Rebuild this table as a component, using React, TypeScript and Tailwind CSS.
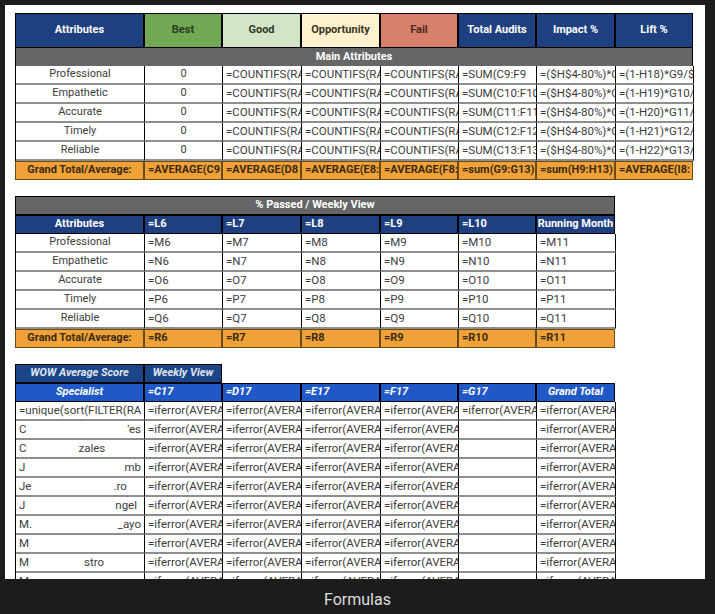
import React from "react";

// column widths shared by the three sheets
const W = ["w-[129px]", "w-[78px]", "w-[79px]", "w-[79px]", "w-[78px]", "w-[78px]", "w-[79px]", "w-[78px]"];

const attrs = ["Professional", "Empathetic", "Accurate", "Timely", "Reliable"];

const HeadCell = ({ w, bg, text = "text-white", align = "justify-center", italic = false, children }: any) => (
    <div
        className={`${w} ${bg} ${text} ${align} ${italic ? "italic" : ""} flex h-full shrink-0 items-center overflow-hidden whitespace-nowrap border border-black px-[3px] text-[11px] font-bold`}
    >
        {children}
    </div>
);

const DataCell = ({ w, center = false, children }: any) => (
    <div
        className={`${w} ${center ? "justify-center text-[11px]" : "text-[11.5px]"} flex h-[19px] shrink-0 items-center overflow-hidden whitespace-nowrap border-r border-b-2 border-r-black border-b-[#8e8e8e] bg-white px-[3px] text-[#3c3c3c]`}
    >
        {children}
    </div>
);

const TotalCell = ({ w, center = false, children }: any) => (
    <div
        className={`${w} ${center ? "justify-center" : ""} flex h-[19px] shrink-0 items-center overflow-hidden whitespace-nowrap border border-[#6b4a14] bg-[#f0a238] px-[3px] text-[11px] font-bold text-[#3a2a10]`}
    >
        {children}
    </div>
);

const Row = ({ children }: any) => <div className="flex border-l border-black">{children}</div>;

const MainSheet = () => {
    const rows = attrs.map((a, i) => [
        a,
        "0",
        "=COUNTIFS(RA",
        "=COUNTIFS(RA",
        "=COUNTIFS(RA",
        `=SUM(C${9 + i}:F${9 + i}`,
        "=($H$4-80%)*G",
        i === 0 ? "=(1-H18)*G9/$" : `=(1-H${18 + i})*G${9 + i}/`,
    ]);
    return (
        <div className="w-[678px]">
            <div className="flex h-[35px]">
                <HeadCell w={W[0]} bg="bg-[#1f4080]">Attributes</HeadCell>
                <HeadCell w={W[1]} bg="bg-[#70a854]" text="text-[#2b3a22]">Best</HeadCell>
                <HeadCell w={W[2]} bg="bg-[#d3e5c7]" text="text-[#2f3a2a]">Good</HeadCell>
                <HeadCell w={W[3]} bg="bg-[#fff2cc]" text="text-[#3a3526]">Opportunity</HeadCell>
                <HeadCell w={W[4]} bg="bg-[#d9806c]" text="text-[#4a2a22]">Fail</HeadCell>
                <HeadCell w={W[5]} bg="bg-[#1f4080]">Total Audits</HeadCell>
                <HeadCell w={W[6]} bg="bg-[#1f4080]">Impact %</HeadCell>
                <HeadCell w={W[7]} bg="bg-[#1f4080]">Lift %</HeadCell>
            </div>
            <div className="flex h-[18px] items-center justify-center border-x border-black bg-[#666666] text-[11px] font-bold text-white">
                Main Attributes
            </div>
            {rows.map((r, i) => (
                <Row key={i}>
                    {r.map((c, j) => (
                        <DataCell key={j} w={W[j]} center={j < 2}>
                            {c}
                        </DataCell>
                    ))}
                </Row>
            ))}
            <div className="flex">
                <TotalCell w={W[0]} center>Grand Total/Average:</TotalCell>
                <TotalCell w={W[1]}>=AVERAGE(C9</TotalCell>
                <TotalCell w={W[2]}>=AVERAGE(D8</TotalCell>
                <TotalCell w={W[3]}>=AVERAGE(E8:</TotalCell>
                <TotalCell w={W[4]}>=AVERAGE(F8:</TotalCell>
                <TotalCell w={W[5]}>=sum(G9:G13)</TotalCell>
                <TotalCell w={W[6]}>=sum(H9:H13)</TotalCell>
                <TotalCell w={W[7]}>=AVERAGE(I8:</TotalCell>
            </div>
        </div>
    );
};

const WeeklySheet = () => {
    const letters = ["M", "N", "O", "P", "Q"];
    const heads = ["=L6", "=L7", "=L8", "=L9", "=L10"];
    return (
        <div className="w-[600px]">
            <div className="flex h-[19px] items-center justify-center border border-black bg-[#666666] text-[11px] font-bold text-white">
                % Passed / Weekly View
            </div>
            <div className="flex h-[19px]">
                <HeadCell w={W[0]} bg="bg-[#1f4080]">Attributes</HeadCell>
                {heads.map((h, i) => (
                    <HeadCell key={h} w={W[i + 1]} bg="bg-[#1f4080]" align="justify-start">
                        {h}
                    </HeadCell>
                ))}
                <HeadCell w={W[6]} bg="bg-[#1f4080]">Running Month</HeadCell>
            </div>
            {attrs.map((a, i) => (
                <Row key={a}>
                    <DataCell w={W[0]} center>{a}</DataCell>
                    {[6, 7, 8, 9, 10, 11].map((n, j) => (
                        <DataCell key={n} w={W[j + 1]}>
                            ={letters[i]}
                            {n}
                        </DataCell>
                    ))}
                </Row>
            ))}
            <div className="flex">
                <TotalCell w={W[0]} center>Grand Total/Average:</TotalCell>
                {[6, 7, 8, 9, 10, 11].map((n, j) => (
                    <TotalCell key={n} w={W[j + 1]}>=R{n}</TotalCell>
                ))}
            </div>
        </div>
    );
};

// names are partly blurred in the source
const names: [string, string, string][] = [
    ["C", "'es", "ml-auto"],
    ["C", "zales", "ml-[52px]"],
    ["J", "mb", "ml-auto"],
    ["Je", ".ro", "ml-[82px]"],
    ["J", "ngel", "ml-auto mr-[4px]"],
    ["M.", "_ayo", "ml-auto"],
    ["M", "", ""],
    ["M", "stro", "ml-[55px]"],
    ["Ma", "ey", "ml-[60px]"],
];

const WowSheet = () => (
    <div className="w-[600px]">
        <div className="flex h-[19px]">
            <HeadCell w={W[0]} bg="bg-[#1c4587]" text="text-[#dfe6f5]" italic>WOW Average Score</HeadCell>
            <HeadCell w={W[1]} bg="bg-[#1c4587]" text="text-[#dfe6f5]" italic>Weekly View</HeadCell>
        </div>
        <div className="flex h-[19px]">
            <HeadCell w={W[0]} bg="bg-[#2158c7]" italic>Specialist</HeadCell>
            {["=C17", "=D17", "=E17", "=F17", "=G17"].map((h, i) => (
                <HeadCell key={h} w={W[i + 1]} bg="bg-[#2158c7]" align="justify-start" italic>
                    {h}
                </HeadCell>
            ))}
            <HeadCell w={W[6]} bg="bg-[#2158c7]" italic>Grand Total</HeadCell>
        </div>
        <Row>
            <DataCell w={W[0]}>=unique(sort(FILTER(RA</DataCell>
            {[1, 2, 3, 4, 5, 6].map((j) => (
                <DataCell key={j} w={W[j]}>=iferror(AVERA</DataCell>
            ))}
        </Row>
        {names.map(([a, b, m], i) => (
            <Row key={i}>
                <DataCell w={W[0]}>
                    <span>{a}</span>
                    {b && <span className={m}>{b}</span>}
                </DataCell>
                {[1, 2, 3, 4].map((j) => (
                    <DataCell key={j} w={W[j]}>=iferror(AVERA</DataCell>
                ))}
                <DataCell w={W[5]}></DataCell>
                <DataCell w={W[6]}>=iferror(AVERA</DataCell>
            </Row>
        ))}
    </div>
);

export default function App() {
    return (
        <div className="h-[614px] w-[715px] overflow-hidden bg-[#1c1c1c] font-[Roboto,'Liberation_Sans',sans-serif]">
            <div className="ml-[5px] mt-[5px] flex h-[574px] w-[700px] flex-col gap-[16px] overflow-hidden bg-white pl-[10px] pt-[8px]">
                <MainSheet />
                <WeeklySheet />
                <WowSheet />
            </div>
            <div className="flex h-[35px] items-center justify-center pt-[7px] text-[16px] text-[#dedede]">Formulas</div>
        </div>
    );
}
